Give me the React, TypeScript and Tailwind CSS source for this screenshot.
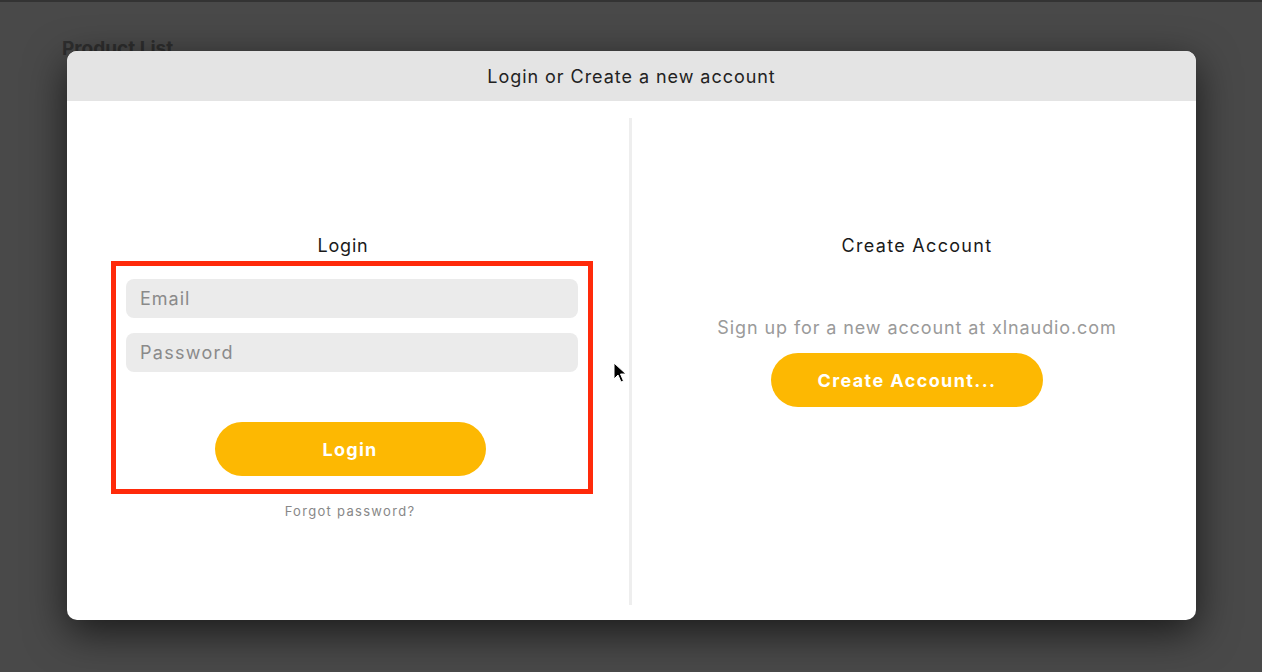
import React from "react";

export default function App() {
  const font = { fontFamily: "Inter, 'Noto Sans', sans-serif" };
  return (
    <div
      className="relative h-[672px] w-[1262px] overflow-hidden bg-[#494949] border-t-2 border-[#333333]"
      style={font}
    >
      <div className="pl-[62px] pt-[33px] text-[19px] font-bold text-[#2e2e2e]">Product List</div>

      <div className="absolute left-[67px] top-[49px] flex h-[569px] w-[1129px] flex-col overflow-hidden rounded-[10px] bg-white shadow-[0_12px_40px_rgba(0,0,0,0.65)]">
        <div className="flex h-[50px] shrink-0 items-center justify-center bg-[#e4e4e4] text-[18px] tracking-[0.95px] text-[#222]">
          Login or Create a new account
        </div>
        <div className="flex flex-1 pt-[17px] pb-[15px]">
          <div className="flex w-[562px] flex-col items-center pt-[116px]">
            <div className="h-[24px] pr-[10px] text-[18px] leading-[24px] tracking-[0.8px] text-[#1a1a1a]">Login</div>
            <div className="ml-[8px] mt-[3px] flex h-[233px] w-[482px] flex-col items-center border-[5px] border-[#ff2a0a] px-[10px] pt-[13px]">
              <input
                placeholder="Email"
                className="h-[39px] w-full rounded-[8px] bg-[#ebebeb] px-[14px] text-[18px] tracking-[1px] text-[#333] outline-none placeholder:text-[#8a8a8a]"
              />
              <input
                type="text"
                placeholder="Password"
                className="mt-[15px] h-[39px] w-full rounded-[8px] bg-[#ebebeb] px-[14px] text-[18px] tracking-[1.3px] text-[#333] outline-none placeholder:text-[#8a8a8a]"
              />
              <button className="mt-[50px] mr-[4px] h-[54px] w-[271px] rounded-full bg-[#fdb802] text-[18px] font-bold tracking-[1.3px] text-white">
                Login
              </button>
            </div>
            <div className="ml-[4px] mt-[8px] text-[13px] leading-[18px] tracking-[1.3px] text-[#888]">
              Forgot password?
            </div>
          </div>
          <div className="w-[3px] bg-[#eeeeee]" />
          <div className="flex flex-1 flex-col items-center pt-[116px]">
            <div className="h-[24px] pl-[6px] text-[18px] leading-[24px] tracking-[1.3px] text-[#1a1a1a]">Create Account</div>
            <div className="mt-[58px] pl-[6px] text-[18px] leading-[24px] tracking-[0.9px] text-[#9a9a9a]">
              Sign up for a new account at xlnaudio.com
            </div>
            <button className="mt-[13px] mr-[14px] h-[54px] w-[272px] rounded-full bg-[#fdb802] text-[18px] font-bold tracking-[1.4px] text-white">
              Create Account...
            </button>
          </div>
        </div>
      </div>

      <svg className="absolute left-[613px] top-[360px]" width="14" height="22" viewBox="0 0 14 22">
        <path d="M1 1 L1 17 L5 13 L8 20 L10.5 19 L7.5 12 L13 12 Z" fill="#000" stroke="#fff" strokeWidth="1" strokeLinejoin="round" />
      </svg>
    </div>
  );
}
